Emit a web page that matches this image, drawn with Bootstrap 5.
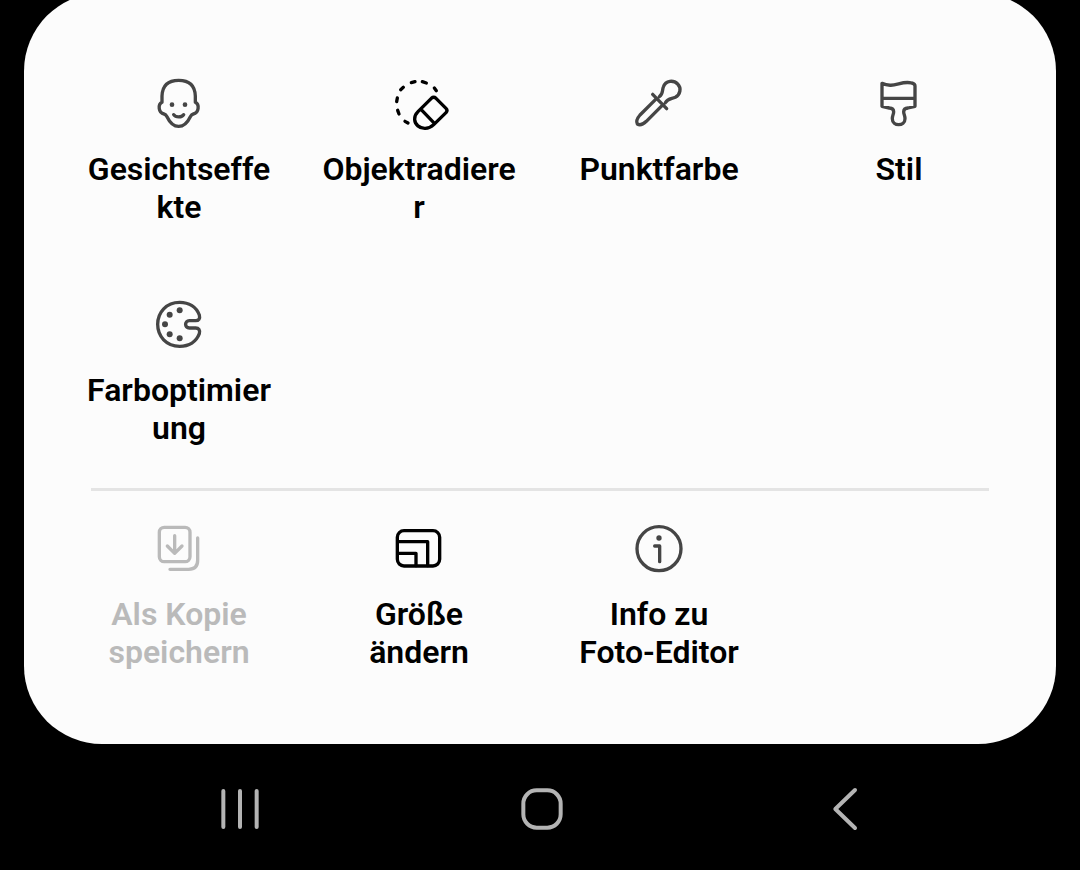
<!DOCTYPE html>
<html lang="de">
<head>
<meta charset="utf-8">
<meta name="viewport" content="width=device-width, initial-scale=1">
<title>Foto-Editor</title>
<link href="https://cdn.jsdelivr.net/npm/bootstrap@5.3.0/dist/css/bootstrap.min.css" rel="stylesheet">
<style>
body { background: #000; font-family: Roboto, sans-serif; }
.sheet { background: #fcfcfc; border-radius: 78px; margin: -7px 24px 0; padding: 79px 37px 73px 35px; }
.tools { row-gap: 67px; }
.tool { color: #000; font-size: 32px; line-height: 38px; font-weight: 600; }
.tool:disabled { color: #bababa; }
.tool-label { width: 195px; max-width: 100%; overflow-wrap: anywhere; margin-top: 14px; }
.glyph { width: 64px; height: 64px; fill: none; stroke: #454545; stroke-width: 10; stroke-linecap: round; stroke-linejoin: round; }
.glyph .dot { fill: #454545; stroke: none; }
.glyph.strong { stroke: #000; }
.glyph.muted { stroke: #bababa; }
.divider { height: 3px; border: 0; background: #e4e4e4; opacity: 1; margin: 41px 30px 26px 32px; }
.system-bar { padding: 33px 85px 29px 89px; }
.system-bar .glyph { stroke: #b4b4b4; stroke-width: 12; }
</style>
</head>
<body>
<main class="sheet">
  <div class="row g-0 tools">
    <div class="col-3">
      <button type="button" class="tool w-100 border-0 bg-transparent p-0 d-flex flex-column align-items-center">
        <svg class="glyph" viewBox="21 24 192 192" aria-hidden="true"><path d="M66 115V96C67 66 84 49 116 49S165 66 166 96V115C179 121 177 147 160 150C155 151 153 154 151 158C142 177 132 187 116 187S90 177 81 158C79 154 77 151 72 150C55 147 53 121 66 115ZM101 152C107 161 126 161 131 152"/><circle class="dot" cx="96" cy="122" r="7"/><circle class="dot" cx="135" cy="122" r="7"/></svg>
        <span class="tool-label">Gesichtseffekte</span>
      </button>
    </div>
    <div class="col-3">
      <button type="button" class="tool w-100 border-0 bg-transparent p-0 d-flex flex-column align-items-center">
        <svg class="glyph strong overflow-visible" viewBox="21 24 192 192" aria-hidden="true"><path d="M94 56L105 53M127 53L139 57M163 72L169 80M70 70L62 77M52 102L50 113M53 139L57 150M75 172L84 177"/><path d="M154 103Q161 97 168 103L198 133Q204 139 198 146L162 181C127 214 84 173 114 143ZM123 136L164 179"/></svg>
        <span class="tool-label">Objektradierer</span>
      </button>
    </div>
    <div class="col-3">
      <button type="button" class="tool w-100 border-0 bg-transparent p-0 d-flex flex-column align-items-center">
        <svg class="glyph" viewBox="21 24 192 192" aria-hidden="true"><path d="M98 91L140 134M110 103L60 153Q46 169 52 180Q63 187 79 172L129 122M118 98C130 90 126 79 130 69C137 48 161 48 173 60C185 72 181 92 166 100C155 105 143 103 136 116"/></svg>
        <span class="tool-label">Punktfarbe</span>
      </button>
    </div>
    <div class="col-3">
      <button type="button" class="tool w-100 border-0 bg-transparent p-0 d-flex flex-column align-items-center">
        <svg class="glyph" viewBox="21 24 192 192" aria-hidden="true"><path d="M66 58C101 75 123 48 155 57Q165 59 165 66V127L144 132Q131 133 131 143C131 151 135 154 135 164C135 188 97 188 97 164C97 154 101 151 101 143Q101 133 88 132L66 127ZM66 103H165"/></svg>
        <span class="tool-label">Stil</span>
      </button>
    </div>
    <div class="col-3">
      <button type="button" class="tool w-100 border-0 bg-transparent p-0 d-flex flex-column align-items-center">
        <svg class="glyph" viewBox="21 24 192 192" aria-hidden="true"><path d="M167 107C176 107 181 101 178 90C169 66 147 52 119 52C79 52 53 82 53 118S79 184 119 184C147 184 169 170 178 146C181 135 176 129 167 129H148C133 129 133 107 148 107Z"/><g class="dot"><circle class="dot" cx="119" cy="76" r="9"/><circle class="dot" cx="89" cy="89" r="9"/><circle class="dot" cx="75" cy="118" r="9"/><circle class="dot" cx="89" cy="148" r="9"/><circle class="dot" cx="119" cy="160" r="9"/></g></svg>
        <span class="tool-label">Farboptimierung</span>
      </button>
    </div>
  </div>
  <hr class="divider">
  <div class="row g-0 tools">
    <div class="col-3">
      <button type="button" disabled class="tool w-100 border-0 bg-transparent p-0 d-flex flex-column align-items-center">
        <svg class="glyph muted" viewBox="21 27 192 192" aria-hidden="true"><rect x="58" y="58" width="92" height="103" rx="15"/><path d="M104 83V135M82 114L104 136L126 114M173 90V157Q173 184 146 184H90"/></svg>
        <span class="tool-label">Als Kopie speichern</span>
      </button>
    </div>
    <div class="col-3">
      <button type="button" class="tool w-100 border-0 bg-transparent p-0 d-flex flex-column align-items-center">
        <svg class="glyph strong" viewBox="21 27 192 192" aria-hidden="true"><rect x="52" y="68" width="127" height="106" rx="20"/><path d="M53 101H143V173M53 136H108V173"/></svg>
        <span class="tool-label">Größe ändern</span>
      </button>
    </div>
    <div class="col-3">
      <button type="button" class="tool w-100 border-0 bg-transparent p-0 d-flex flex-column align-items-center">
        <svg class="glyph" viewBox="21 27 192 192" aria-hidden="true"><circle cx="117" cy="122" r="66"/><path d="M104 114H119V161"/><circle class="dot" cx="117" cy="90" r="8"/></svg>
        <span class="tool-label">Info zu <span class="text-nowrap">Foto-Editor</span></span>
      </button>
    </div>
  </div>
</main>
<nav class="system-bar d-flex" aria-label="Systemnavigation">
  <button type="button" class="flex-fill w-100 border-0 bg-transparent p-0 d-flex justify-content-center" aria-label="Letzte Apps"><svg class="glyph" viewBox="0 0 192 192"><path d="M46 42V150M96 42V150M146 42V150"/></svg></button>
  <button type="button" class="flex-fill w-100 border-0 bg-transparent p-0 d-flex justify-content-center" aria-label="Startseite"><svg class="glyph" viewBox="0 0 192 192"><rect x="40" y="40" width="112" height="112" rx="40"/></svg></button>
  <button type="button" class="flex-fill w-100 border-0 bg-transparent p-0 d-flex justify-content-center" aria-label="Zurück"><svg class="glyph" viewBox="0 0 192 192"><path d="M129 39L70 96L129 153"/></svg></button>
</nav>
<script src="https://cdn.jsdelivr.net/npm/bootstrap@5.3.0/dist/js/bootstrap.bundle.min.js"></script>
</body>
</html>
